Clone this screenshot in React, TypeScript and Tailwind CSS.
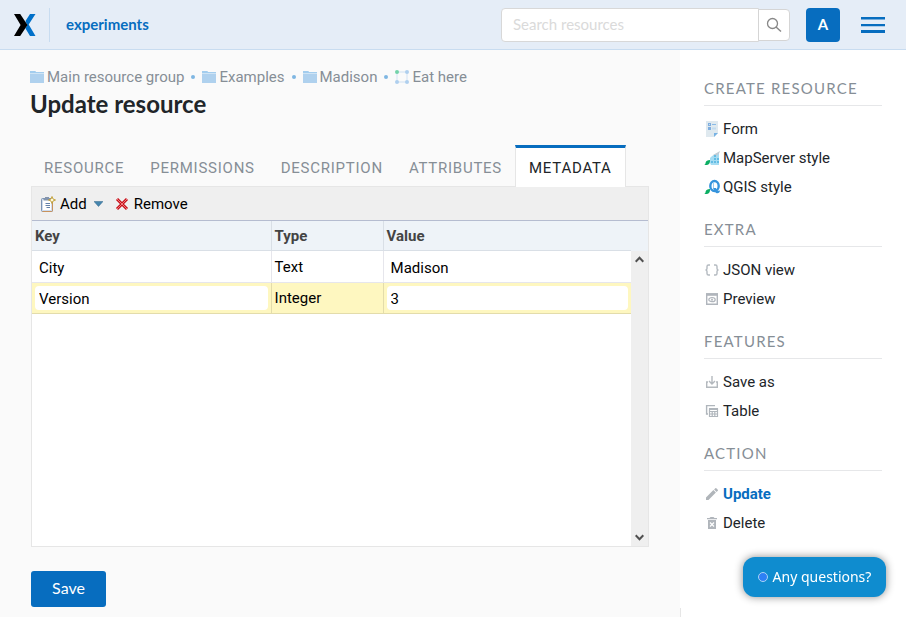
import React from "react";

const FolderIcon = () => (
  <svg width="14" height="14" viewBox="0 0 14 14" aria-hidden="true">
    <path d="M0 1h5l1 1h8v11H0z" fill="#afd1ee" />
    <path d="M0 1h5l1 1h8v1H0z" fill="#a3cdee" />
    <path d="M0 3h14v1H0z" fill="#cfe4f5" />
  </svg>
);

const PolygonIcon = () => (
  <svg width="14" height="14" viewBox="0 0 14 14" aria-hidden="true">
    <path d="M2 2h10v10H2z" fill="none" stroke="#dde9f5" strokeWidth="1.4" />
    <circle cx="2" cy="2" r="2" fill="#74d3a9" />
    <circle cx="12" cy="2" r="2" fill="#afcfee" />
    <circle cx="2" cy="12" r="2" fill="#afcfee" />
    <circle cx="12" cy="12" r="2" fill="#afcfee" />
  </svg>
);

const Logo = () => (
  <svg width="22" height="22" viewBox="0 0 22 22" aria-hidden="true">
    <path d="M16 0h5.500l-6.800 10.500L21.500 22H16l-4.500-7.500L13 11l-1.500-4z" fill="#0070c9" />
    <path d="M0 0h6.200l7.300 11-7.300 11H0l6.600-11z" fill="#000" />
  </svg>
);

const AddIcon = () => (
  <svg width="16" height="16" viewBox="0 0 16 16" aria-hidden="true">
    <rect x="1.5" y="2.500" width="11" height="13" rx="1" fill="#cfdcee" stroke="#7b93b3" />
    <path d="M12.500 7v7.500q0 1-1 1H2.500" fill="none" stroke="#c9925a" />
    <rect x="3" y="4" width="8" height="10" fill="#fff" />
    <path d="M3.500 4.500V2.500H5V1h4v1.500h1.500v2z" fill="#8394ad" />
    <path d="M5.500 7.500H10M5.500 9.500H10M6.500 11.500H10" stroke="#6280a8" />
    <path d="M12 .5l1 2.500 2.500 1L13 5l-1 2.500L11 5 8.500 4 11 3z" fill="#fffbe0" stroke="#c09a2b" strokeWidth=".9" />
  </svg>
);

const RemoveIcon = () => (
  <svg width="14" height="14" viewBox="0 0 14 14" aria-hidden="true">
    <path d="M2 2l10 10M12 2L2 12" stroke="#c8101a" strokeWidth="3" />
    <path d="M2 2l10 10M12 2L2 12" stroke="#f08488" strokeWidth=".9" />
  </svg>
);

const FormIcon = () => (
  <svg width="16" height="18" viewBox="0 0 16 18" aria-hidden="true">
    <path d="M2 1h12v12l-4 4H2z" fill="#dfe9ef" />
    <path d="M10 17v-4h4z" fill="#77b2e4" />
    <path d="M4 3h3v3H4zM4 7h3v3H4z" fill="#7faedf" />
    <path d="M5 4h1v1H5z" fill="#c7def3" />
    <path d="M8 4.500h4" stroke="#89bae6" />
    <path d="M8 8.500h4" stroke="#c1dbef" strokeWidth="2" />
  </svg>
);

const Leaf = () => (
  <path d="M0 15c1-.3 1.500-1 1.500-2 .5-2.300 2-3 4.500-3 .3 3-1 4.800-3 5z" fill="#0bae63" />
);

const MapServerIcon = () => (
  <svg width="16" height="16" viewBox="0 0 16 16" aria-hidden="true">
    <path d="M6 8c2-2 4-4 9-5v12H7l-1-2z" fill="#a5dcf2" />
    <path d="M9 5l7-4-1 2.500L11 7z" fill="#c2ccd4" />
    <path d="M10 5h2v2h-2zM10 8h2v2h-2zM13 8h2v2h-2zM10 11h2v2h-2zM13 11h2v2h-2zM7 11h2v2H7z" fill="#63bce4" />
    <Leaf />
  </svg>
);

const QgisIcon = () => (
  <svg width="16" height="16" viewBox="0 0 16 16" aria-hidden="true">
    <ellipse cx="10.500" cy="7" rx="4.200" ry="5" fill="none" stroke="#3694dc" strokeWidth="2.400" />
    <path d="M9 9h3l1 3 3-.5c0 2.500-3 4-5 1.500z" fill="#3694dc" />
    <path d="M9.500 4v5" stroke="#9bcdf0" />
    <Leaf />
  </svg>
);

const JsonIcon = () => (
  <svg width="16" height="16" viewBox="0 0 16 16" fill="none" stroke="#b4bac0" strokeWidth="1.400" aria-hidden="true">
    <path d="M6 3H4.500Q3 3 3 4.500v2Q3 8 1.500 8 3 8 3 9.500v2Q3 13 4.500 13H6M10 3h1.500Q13 3 13 4.500v2Q13 8 14.500 8 13 8 13 9.500v2q0 1.500-1.500 1.500H10" />
  </svg>
);

const PreviewIcon = () => (
  <svg width="16" height="16" viewBox="0 0 16 16" fill="none" stroke="#b0b5bc" aria-hidden="true">
    <path d="M2.700 3h10.600v10.300H2.700z" strokeWidth="1.400" />
    <path d="M2 3.500h12" strokeWidth="2.600" />
    <ellipse cx="8" cy="8.700" rx="3.200" ry="2" strokeWidth="1.200" />
    <circle cx="8" cy="8.700" r="1" fill="#b0b5bc" stroke="none" />
  </svg>
);

const SaveAsIcon = () => (
  <svg width="16" height="16" viewBox="0 0 16 16" fill="none" stroke="#b4b9be" strokeWidth="1.400" aria-hidden="true">
    <path d="M4 8H2.700v5.300h10.600V8H12M8 2v7.500M5 7l3 3 3-3" />
  </svg>
);

const TableIcon = () => (
  <svg width="16" height="16" viewBox="0 0 16 16" fill="none" stroke="#b0b6bc" aria-hidden="true">
    <path d="M11 2.600H2.600V11H4" strokeWidth="1.400" />
    <path d="M5.500 6h8v7.500h-8zM5.500 8.500h8M5.500 11h8M8.200 8v6M10.800 8v6" strokeWidth="1.200" />
    <path d="M5 6h9" strokeWidth="2" />
  </svg>
);

const PencilIcon = () => (
  <svg width="16" height="16" viewBox="0 0 16 16" fill="#b0b5ba" aria-hidden="true">
    <path d="M2 11.500V14h2.500l7.400-7.400-2.500-2.500zM13.800 4.700a.7.7 0 0 0 0-1l-1.500-1.500a.7.700 0 0 0-1 0L10.100 3.400l2.500 2.500z" />
  </svg>
);

const TrashIcon = () => (
  <svg width="16" height="16" viewBox="0 0 16 16" aria-hidden="true">
    <path d="M3 3h2.500l1-1h3l1 1H13v1.300H3zM4 5h8v9H4z" fill="#b0b5bb" />
    <path d="M6 7.500l4 4M10 7.500l-4 4" stroke="#fff" strokeWidth="1.200" />
  </svg>
);

const crumbs = [
  { label: "Main resource group", icon: <FolderIcon /> },
  { label: "Examples", icon: <FolderIcon /> },
  { label: "Madison", icon: <FolderIcon /> },
  { label: "Eat here", icon: <PolygonIcon /> },
];

const tabs = ["Resource", "Permissions", "Description", "Attributes", "Metadata"];

const rows = [
  { key: "City", type: "Text", value: "Madison" },
  { key: "Version", type: "Integer", value: "3", selected: true },
];

const menu = [
  {
    title: "Create resource",
    items: [
      { label: "Form", icon: <FormIcon /> },
      { label: "MapServer style", icon: <MapServerIcon /> },
      { label: "QGIS style", icon: <QgisIcon /> },
    ],
  },
  {
    title: "Extra",
    items: [
      { label: "JSON view", icon: <JsonIcon /> },
      { label: "Preview", icon: <PreviewIcon /> },
    ],
  },
  {
    title: "Features",
    items: [
      { label: "Save as", icon: <SaveAsIcon /> },
      { label: "Table", icon: <TableIcon /> },
    ],
  },
  {
    title: "Action",
    items: [
      { label: "Update", icon: <PencilIcon />, active: true },
      { label: "Delete", icon: <TrashIcon /> },
    ],
  },
];

function Header() {
  return (
    <header className="flex h-[50px] items-center border-b border-[#c8dcf0] bg-[#e5edf7] pl-3.5 pr-[21px] font-['Lato',sans-serif]">
      <a href="#home" aria-label="Home" className="pr-[13px]">
        <Logo />
      </a>
      <a href="#experiments" className="flex h-[34px] items-center border-l border-[#c8dcf0] pb-0.5 pl-4 text-[15px] font-bold text-[#076dbf]">
        experiments
      </a>
      <form className="ml-auto flex items-center">
        <input
          type="text"
          aria-label="Search resources"
          placeholder="Search resources"
          className="h-[34px] w-[258px] rounded-l-sm border border-[#d8d8d8] bg-white px-[11px] pb-0.5 text-[15px] outline-none placeholder:text-[#dadada]"
        />
        <button type="button" aria-label="Search" className="-ml-px flex h-8 w-8 items-center justify-center rounded-r-sm border border-[#d5d5d5] bg-white">
          <svg width="16" height="16" viewBox="0 0 16 16" fill="none" stroke="#888" strokeWidth="1.300" aria-hidden="true">
            <circle cx="6.500" cy="6.500" r="5" />
            <path d="M10 10l5 4.500" strokeWidth="1.500" />
          </svg>
        </button>
      </form>
      <button type="button" className="ml-4 size-[34px] rounded-sm bg-[#076dbf] pb-0.5 text-[15px] font-bold text-white">
        A
      </button>
      <button type="button" aria-label="Menu" className="ml-[21px]">
        <svg width="24" height="16" viewBox="0 0 24 16" aria-hidden="true">
          <path d="M0 0h24v2.500H0zM0 7h24v2.300H0zM0 13h24v3H0z" fill="#076dbf" />
        </svg>
      </button>
    </header>
  );
}

function MetadataGrid() {
  return (
    <div className="border border-[#e6e6e6] bg-white text-black">
      <div className="flex h-[34px] items-center border-b border-[#b5bcd0] bg-[#efefef] pl-2">
        <button type="button" className="flex items-center">
          <AddIcon />
          <span className="ml-1">Add</span>
          <svg className="ml-[7px]" width="9" height="6" viewBox="0 0 9 6" aria-hidden="true">
            <path d="M0 .5h9L4.500 5.500z" fill="#4686ae" stroke="#35688c" strokeWidth=".5" />
          </svg>
        </button>
        <button type="button" className="ml-3 flex items-center">
          <RemoveIcon />
          <span className="ml-[5px]">Remove</span>
        </button>
      </div>
      <div className="flex h-[325px]">
        <div className="flex-1">
          <table className="w-full table-fixed border-separate border-spacing-0 text-left">
            <colgroup>
              <col className="w-[40%]" />
              <col className="w-28" />
              <col />
            </colgroup>
            <thead>
              <tr className="h-[30px] bg-[#eef3f8] text-[#444]">
                <th className="border-b border-r border-[#d9dfe6] px-[3px] py-0 font-bold">Key</th>
                <th className="border-b border-r border-[#d9dfe6] px-[3px] py-0 font-bold">Type</th>
                <th className="border-b border-[#d9dfe6] px-[3px] py-0 font-bold">Value</th>
              </tr>
            </thead>
            <tbody>
              {rows.map((r) => {
                const line = r.selected ? "border-[#e3dcab]" : "border-[#e6e6ec]";
                return (
                  <tr key={r.key} className={r.selected ? "bg-[#fef7c0]" : "h-8 bg-white"}>
                    <td className={`border-b border-r ${line} p-[3px]`}>
                      <input aria-label={`${r.key} key`} defaultValue={r.key} className="block h-6 w-full rounded bg-white px-1 pt-0.5 outline-none" />
                    </td>
                    <td className={`border-b border-r ${line} px-[3px] py-0`}>{r.type}</td>
                    <td className={`border-b ${line} p-[3px]`}>
                      <input aria-label={`${r.key} value`} defaultValue={r.value} className="block h-6 w-full rounded bg-white px-1 pt-0.5 outline-none" />
                    </td>
                  </tr>
                );
              })}
            </tbody>
          </table>
        </div>
        <div className="flex w-[17px] flex-col items-center justify-between bg-[#efefef]">
          <div className="flex w-full flex-col items-center">
            <div className="h-[30px] w-full bg-[#eef3f8]" />
            <svg className="mt-[5px]" width="9" height="7" viewBox="0 0 9 7" aria-hidden="true">
              <path d="M.7 5.700L4.500 1.800l3.800 3.900" fill="none" stroke="#505050" strokeWidth="2" />
            </svg>
          </div>
          <svg className="mb-[5px]" width="9" height="7" viewBox="0 0 9 7" aria-hidden="true">
            <path d="M.7 1.300l3.800 3.900 3.800-3.900" fill="none" stroke="#505050" strokeWidth="2" />
          </svg>
        </div>
      </div>
    </div>
  );
}

export default function App() {
  return (
    <div className="flex min-h-screen flex-col bg-white font-['Roboto',sans-serif] text-[15px] leading-5 text-[#212529]">
      <Header />
      <div className="flex flex-1">
        <main className="min-w-0 flex-1 bg-[#fafafa] pb-2.5 pl-[31px] pr-[31px] pt-[17px]">
          <nav aria-label="Breadcrumb" className="-ml-px">
            <ol className="flex items-center text-[#868e96]">
              {crumbs.map((c, i) => (
                <li key={c.label} className="flex items-center">
                  {i > 0 && <span className="mx-[7px] size-1 rounded-full bg-[#7fb6e2]" />}
                  <a href="#crumb" className="flex items-center gap-[3px]">
                    {c.icon}
                    {c.label}
                  </a>
                </li>
              ))}
            </ol>
          </nav>
          <h1 className="-ml-px mt-[3px] font-['Lato',sans-serif] text-[24px] font-bold leading-7">Update resource</h1>
          <div role="tablist" className="relative -mb-px mt-[27px] flex">
            {tabs.map((t) => (
              <button
                key={t}
                type="button"
                role="tab"
                aria-selected={t === "Metadata"}
                className={
                  t === "Metadata"
                    ? "h-[42px] border-x border-t-3 border-x-[#e6e6e6] border-t-[#076dbf] bg-white px-[13px] uppercase tracking-wider"
                    : "h-[42px] border-t-3 border-transparent px-[13px] uppercase tracking-wider text-[#868e96]"
                }
              >
                {t}
              </button>
            ))}
          </div>
          <MetadataGrid />
          <button type="button" className="mt-6 h-9 w-[75px] rounded-[3px] bg-[#076dbf] pb-0.5 font-['Lato',sans-serif] text-[16px] text-white">
            Save
          </button>
        </main>
        <aside className="flex w-[226px] flex-col justify-between">
          <div className="px-6 pt-7">
            {menu.map((g) => (
              <section key={g.title} className="mb-[18px]">
                <h2 className="border-b border-[#e6e7e9] pb-[7px] font-['Lato',sans-serif] uppercase tracking-[0.08em] text-[#868e96]">{g.title}</h2>
                <ul className="pt-2">
                  {g.items.map((it) => (
                    <li key={it.label}>
                      <a href="#item" className={"active" in it && it.active ? "flex h-[29px] items-center font-bold text-[#076dbf]" : "flex h-[29px] items-center"}>
                        <span className="w-[19px]">{it.icon}</span>
                        {it.label}
                      </a>
                    </li>
                  ))}
                </ul>
              </section>
            ))}
          </div>
          <div className="h-[9px] border-l border-[#e6e6e6]" />
        </aside>
      </div>
      <button
        type="button"
        className="fixed bottom-5 right-5 flex h-10 w-[143px] items-center justify-center gap-[5px] rounded-xl bg-[#0f8ccf] font-['Noto_Sans',sans-serif] text-[14px] text-white shadow-[0_0_8px_rgba(0,0,0,0.45)]"
      >
        <span className="size-2.5 rounded-full border border-[#a9d4f5] bg-[#2d80f5]" />
        Any questions?
      </button>
    </div>
  );
}
